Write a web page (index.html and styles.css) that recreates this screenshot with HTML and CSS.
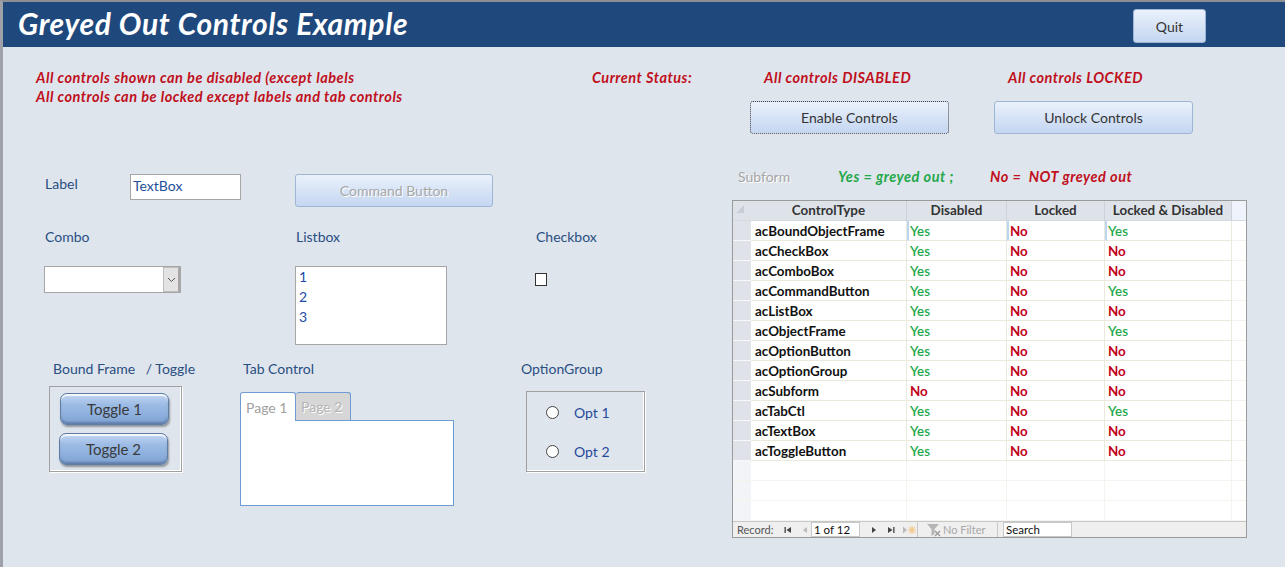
FILE: index.html
```html
<!DOCTYPE html>
<html>
<head>
<meta charset="utf-8">
<link rel="stylesheet" href="styles.css">
</head>
<body>
<div class="window">
  <header class="titlebar">
    <h1 class="title">Greyed Out Controls Example</h1>
    <button class="btn quit">Quit</button>
  </header>
  <main class="form">
    <section class="top">
      <div class="notes">
        <p>All controls shown can be disabled (except labels</p>
        <p>All controls can be locked except labels and tab controls</p>
      </div>
      <div class="status-label">Current Status:</div>
      <div class="status-col">
        <div class="status-text">All controls DISABLED</div>
        <button class="btn action focused">Enable Controls</button>
      </div>
      <div class="status-col second">
        <div class="status-text">All controls LOCKED</div>
        <button class="btn action">Unlock Controls</button>
      </div>
    </section>
    <section class="content">
      <div class="controls">
        <div class="row row1">
          <div class="lbl w-label">Label</div>
          <div class="textbox">TextBox</div>
          <button class="btn cmd" disabled>Command Button</button>
        </div>
        <div class="row row2">
          <div class="lbl w-combo">Combo</div>
          <div class="lbl w-list">Listbox</div>
          <div class="lbl">Checkbox</div>
        </div>
        <div class="row row3">
          <div class="combo"><span class="combo-field"></span><span class="combo-arrow"><svg width="9" height="6" viewBox="0 0 9 6"><path d="M1 1 L4.5 4.5 L8 1" fill="none" stroke="#555" stroke-width="1"/></svg></span></div>
          <div class="listbox"><div>1</div><div>2</div><div>3</div></div>
          <div class="checkbox"></div>
        </div>
        <div class="row row4">
          <div class="lbl w-frame">Bound Frame&nbsp;&nbsp; / Toggle</div>
          <div class="lbl w-tab">Tab Control</div>
          <div class="lbl">OptionGroup</div>
        </div>
        <div class="row row5">
          <div class="frame">
            <div class="toggle t1">Toggle 1</div>
            <div class="toggle t2">Toggle 2</div>
          </div>
          <div class="tabctl">
            <div class="tabs">
              <div class="tab active">Page 1</div>
              <div class="tab inactive">Page 2</div>
            </div>
            <div class="tabpanel"></div>
          </div>
          <div class="optgroup">
            <div class="opt"><span class="radio"></span><span class="opt-lbl">Opt 1</span></div>
            <div class="opt"><span class="radio"></span><span class="opt-lbl">Opt 2</span></div>
          </div>
        </div>
      </div>
      <div class="subform">
        <div class="subhead">
          <span class="sub-lbl">Subform</span>
          <span class="legend-yes">Yes = greyed out ;</span>
          <span class="legend-no">No =&nbsp; NOT greyed out</span>
        </div>
        <div class="datasheet">
          <div class="grid">
            <div class="hc sel"><svg width="10" height="10" viewBox="0 0 10 10"><path d="M9 1 L9 9 L1 9 Z" fill="#c9ced6"/></svg></div>
            <div class="hc">ControlType</div>
            <div class="hc">Disabled</div>
            <div class="hc">Locked</div>
            <div class="hc">Locked &amp; Disabled</div>
            <div class="hc pad"></div>

            <div class="c sel"></div><div class="c name cur">acBoundObjectFrame</div><div class="c y cur">Yes</div><div class="c n cur">No</div><div class="c y cur">Yes</div><div class="c pad"></div>
            <div class="c sel"></div><div class="c name">acCheckBox</div><div class="c y">Yes</div><div class="c n">No</div><div class="c n">No</div><div class="c pad"></div>
            <div class="c sel"></div><div class="c name">acComboBox</div><div class="c y">Yes</div><div class="c n">No</div><div class="c n">No</div><div class="c pad"></div>
            <div class="c sel"></div><div class="c name">acCommandButton</div><div class="c y">Yes</div><div class="c n">No</div><div class="c y">Yes</div><div class="c pad"></div>
            <div class="c sel"></div><div class="c name">acListBox</div><div class="c y">Yes</div><div class="c n">No</div><div class="c n">No</div><div class="c pad"></div>
            <div class="c sel"></div><div class="c name">acObjectFrame</div><div class="c y">Yes</div><div class="c n">No</div><div class="c y">Yes</div><div class="c pad"></div>
            <div class="c sel"></div><div class="c name">acOptionButton</div><div class="c y">Yes</div><div class="c n">No</div><div class="c n">No</div><div class="c pad"></div>
            <div class="c sel"></div><div class="c name">acOptionGroup</div><div class="c y">Yes</div><div class="c n">No</div><div class="c n">No</div><div class="c pad"></div>
            <div class="c sel"></div><div class="c name">acSubform</div><div class="c n">No</div><div class="c n">No</div><div class="c n">No</div><div class="c pad"></div>
            <div class="c sel"></div><div class="c name">acTabCtl</div><div class="c y">Yes</div><div class="c n">No</div><div class="c y">Yes</div><div class="c pad"></div>
            <div class="c sel"></div><div class="c name">acTextBox</div><div class="c y">Yes</div><div class="c n">No</div><div class="c n">No</div><div class="c pad"></div>
            <div class="c sel"></div><div class="c name">acToggleButton</div><div class="c y">Yes</div><div class="c n">No</div><div class="c n">No</div><div class="c pad"></div>

            <div class="e sel"></div><div class="e"></div><div class="e"></div><div class="e"></div><div class="e"></div><div class="e pad"></div>
            <div class="e sel"></div><div class="e"></div><div class="e"></div><div class="e"></div><div class="e"></div><div class="e pad"></div>
            <div class="e sel"></div><div class="e"></div><div class="e"></div><div class="e"></div><div class="e"></div><div class="e pad"></div>
          </div>
          <div class="navbar">
            <span class="nav-rec">Record:</span>
            <span class="nav-ico first"><svg width="8" height="8" viewBox="0 0 8 8"><rect x="0.5" y="1" width="1.3" height="6" fill="#444"/><path d="M7 1 L7 7 L2.5 4 Z" fill="#444"/></svg></span>
            <span class="nav-ico prev"><svg width="6" height="8" viewBox="0 0 6 8"><path d="M5 1 L5 7 L1 4 Z" fill="#bbb"/></svg></span>
            <span class="nav-box">1 of 12</span>
            <span class="nav-ico next"><svg width="6" height="8" viewBox="0 0 6 8"><path d="M1 1 L1 7 L5 4 Z" fill="#444"/></svg></span>
            <span class="nav-ico last"><svg width="8" height="8" viewBox="0 0 8 8"><path d="M1 1 L1 7 L5.5 4 Z" fill="#444"/><rect x="6.2" y="1" width="1.3" height="6" fill="#444"/></svg></span>
            <span class="nav-ico new"><svg width="14" height="10" viewBox="0 0 14 10"><path d="M1 1.5 L1 8.5 L5 5 Z" fill="#bbb"/><g stroke="#f3c98a" stroke-width="1.2"><path d="M10 1 L10 9"/><path d="M6 5 L14 5"/><path d="M7.2 2.2 L12.8 7.8"/><path d="M12.8 2.2 L7.2 7.8"/></g></svg></span>
            <span class="nav-sep"></span>
            <span class="nav-filter"><svg width="16" height="14" viewBox="0 0 16 14"><path d="M1 1 L13 1 L8.5 6 L8.5 11 L5.5 13 L5.5 6 Z" fill="#b5b5b5"/><path d="M9 8 L14 13 M14 8 L9 13" stroke="#9a9a9a" stroke-width="1.3"/></svg>No Filter</span>
            <span class="nav-sep"></span>
            <span class="nav-search">Search</span>
          </div>
        </div>
      </div>
    </section>
  </main>
</div>
</body>
</html>
```
FILE: styles.css
```css
* { box-sizing: border-box; }
html, body { margin: 0; padding: 0; }
body {
  width: 1285px;
  height: 567px;
  overflow: hidden;
  font-family: Lato, "Open Sans", sans-serif;
  background: #dfe5ed;
}
.window {
  height: 567px;
  border-left: 3px solid #9ea2a8;
  border-top: 2px solid #8c8f94;
  background: #dfe5ed;
}
.titlebar {
  height: 45px;
  background: #1f497d;
  display: flex;
  align-items: flex-start;
  justify-content: space-between;
  padding: 0 79px 0 15px;
}
.title {
  margin: 4px 0 0 0;
  color: #fff;
  font-size: 30px;
  font-weight: 700;
  font-style: italic;
  line-height: 34px;
  letter-spacing: 0.65px;
}
.btn {
  font-family: Lato, "Open Sans", sans-serif;
  background: linear-gradient(#eaf1fb, #c4d6f1);
  border: 1px solid #9fb5d4;
  border-radius: 3px;
  color: #333;
  font-size: 14px;
  padding: 0;
}
.quit {
  margin-top: 7px;
  width: 73px;
  height: 34px;
}
.top {
  display: flex;
  padding-top: 21px;
  height: 87px;
}
.notes {
  width: 556px;
  margin-left: 33px;
}
.notes p, .status-label, .status-text {
  margin: 0;
  color: #c0101c;
  font-weight: 700;
  font-style: italic;
  font-size: 14.5px;
  letter-spacing: 0.5px;
  line-height: 19px;
  white-space: nowrap;
}
.status-label { width: 158px; }
.status-col {
  width: 199px;
  display: flex;
  flex-direction: column;
}
.status-col.second { margin-left: 45px; }
.status-text { padding-left: 14px; }
.action {
  margin-top: 14px;
  height: 33px;
  width: 199px;
}
.focused { border: 1px dotted #444; }

.content {
  display: flex;
  margin-top: 33px;
}
.controls {
  width: 729px;
  padding-top: 7px;
}
.row { display: flex; }
.lbl {
  color: #284e82;
  font-size: 14px;
  line-height: 19px;
  white-space: nowrap;
}
.row1 { height: 33px; }
.row1 .lbl { margin-left: 42px; width: 85px; }
.textbox {
  width: 111px;
  height: 26px;
  background: #fff;
  border: 1px solid #a6a6a6;
  color: #1f4f9a;
  font-size: 14px;
  line-height: 22px;
  padding-left: 2px;
}
.cmd {
  margin-left: 54px;
  width: 198px;
  height: 33px;
  color: #a8a8a8;
  text-shadow: 1px 1px 0 #fff;
}
.row2 { margin-top: 20px; }
.row2 .w-combo { margin-left: 42px; width: 251px; }
.row2 .w-list { width: 240px; }
.row3 { margin-top: 20px; }
.combo {
  margin-left: 41px;
  width: 137px;
  height: 27px;
  border: 1px solid #a6a6a6;
  background: #fff;
  display: flex;
}
.combo-field { flex: 1; }
.combo-arrow {
  width: 17px;
  background: #e3e3e3;
  border: 1px solid #bdbdbd;
  border-right: 2px solid #a6a6a6;
  display: flex;
  align-items: center;
  justify-content: center;
}
.listbox {
  margin-left: 114px;
  width: 152px;
  height: 79px;
  background: #fff;
  border: 1px solid #a6a6a6;
  padding: 0 0 0 3px;
  color: #1d4aa8;
  font-size: 14px;
  line-height: 20px;
}
.checkbox {
  margin-left: 88px;
  margin-top: 7px;
  width: 12px;
  height: 13px;
  border: 1px solid #333;
  background: #fff;
}
.row4 { margin-top: 14px; }
.row4 .w-frame { margin-left: 50px; width: 190px; }
.row4 .w-tab { width: 278px; }
.row5 { margin-top: 8px; }
.frame {
  margin-left: 46px;
  width: 133px;
  height: 86px;
  border: 1px solid #a0a0a0;
  box-shadow: inset -1px -1px 0 #fff, 1px 1px 0 #fff;
  padding-top: 6px;
}
.toggle {
  width: 109px;
  height: 32px;
  border-radius: 7px;
  border: 1px solid #5d7ca6;
  background: linear-gradient(#c3d6f2 0%, #9dbce5 35%, #8cafdd 70%, #7fa1d0 100%);
  box-shadow: inset 0 2px 1px rgba(255,255,255,0.85), inset 0 -2px 2px rgba(40,60,100,0.35), 1px 2px 2px rgba(0,0,0,0.35);
  color: #3a3a3a;
  font-size: 15px;
  line-height: 30px;
  text-align: center;
}
.t1 { margin-left: 10px; }
.t2 { margin-left: 9px; margin-top: 8px; }
.tabctl {
  margin-left: 58px;
  margin-top: 6px;
  width: 214px;
}
.tabs { display: flex; height: 28px; align-items: flex-end; }
.tab {
  font-size: 14px;
  color: #a0a0a0;
  border: 1px solid #6f9bd5;
  border-bottom: none;
  border-radius: 3px 3px 0 0;
  padding-left: 5px;
}
.tab.active {
  width: 56px;
  height: 29px;
  background: #fff;
  position: relative;
  z-index: 1;
  margin-bottom: -1px;
  line-height: 30px;
}
.tab.inactive {
  width: 55px;
  height: 28px;
  background: #d6d6d6;
  color: #b4b4b4;
  text-shadow: 1px 1px 0 #fff;
  line-height: 28px;
  border-left: none;
  padding-left: 5px;
  margin-top: 1px;
}
.tabpanel {
  height: 86px;
  background: #fff;
  border: 1px solid #6f9bd5;
}
.optgroup {
  margin-left: 72px;
  margin-top: 5px;
  width: 119px;
  height: 81px;
  border: 1px solid #a0a0a0;
  box-shadow: inset -1px -1px 0 #fff, 1px 1px 0 #fff;
  padding-top: 10px;
}
.opt { display: flex; align-items: center; height: 20px; margin-bottom: 19px; }
.radio {
  margin-left: 19px;
  width: 13px;
  height: 13px;
  border-radius: 50%;
  border: 1px solid #444;
  background: #fff;
}
.opt-lbl {
  margin-left: 15px;
  color: #1f4a9a;
  font-size: 14px;
}

.subform { width: 515px; }
.subhead {
  height: 33px;
  display: flex;
  font-size: 14px;
  line-height: 19px;
  padding-top: 0;
}
.sub-lbl {
  margin-left: 6px;
  width: 100px;
  color: #a6a6a6;
  text-shadow: 1px 1px 0 #fff;
}
.legend-yes, .legend-no {
  font-weight: 700;
  font-style: italic;
  font-size: 14.5px;
  letter-spacing: 0.5px;
}
.legend-yes { color: #22a84a; width: 152px; white-space: nowrap; }
.legend-no { color: #c0101c; white-space: pre; }
.datasheet {
  width: 515px;
  height: 338px;
  border: 1px solid #9a9a9a;
  background: #fff;
}
.grid {
  display: grid;
  grid-template-columns: 18px 156px 100px 98px 127px 1fr;
  grid-auto-rows: 20px;
}
.hc {
  background: #dee3ea;
  border-right: 1px solid #cdd2da;
  border-bottom: 1px solid #d5d9e0;
  font-size: 13.4px;
  font-weight: 700;
  color: #333;
  text-align: center;
  line-height: 19px;
  white-space: nowrap;
}
.hc.sel { display: flex; align-items: flex-start; padding: 3px 0 0 2px; border-right: none; }
.hc.pad { background: #eff3fb; border-right: none; }
.c {
  border-right: 1px solid #ebe9dc;
  border-bottom: 1px solid #ebe9dc;
  font-size: 13.4px;
  font-weight: 700;
  line-height: 20px;
  padding-left: 3px;
  white-space: nowrap;
}
.c.sel { background: #dfe3e9; border-right: none; border-bottom: 1px solid #f6f7f9; padding: 0; }
.c.name { color: #111; padding-left: 4px; }
.c.y { color: #1ea84b; font-weight: 600; }
.c.n { color: #c00018; }
.c.cur { border-left: 2px solid #bcd6f2; padding-left: 1px; }
.c.name.cur { border-left: none; padding-left: 4px; }
.c.pad { border-right: none; border-bottom: 1px solid #f3f3ee; }
.e {
  border-right: 1px solid #f4f4ef;
  border-bottom: 1px solid #f4f4ef;
}
.e.sel { background: #f2f4f8; border-right: none; }
.e.pad { border-right: none; }
.navbar {
  height: 16px;
  background: #efefef;
  border-top: 1px solid #c8c8c8;
  display: flex;
  align-items: center;
  font-size: 11px;
  color: #555;
  font-family: Lato, "Open Sans", sans-serif;
}
.nav-rec { margin-left: 4px; width: 47px; }
.nav-ico { display: flex; align-items: center; }
.nav-ico.first { width: 18px; }
.nav-ico.prev { width: 9px; }
.nav-box {
  width: 49px;
  height: 15px;
  background: #fff;
  border: 1px solid #c8c8c8;
  color: #111;
  padding-left: 2px;
  line-height: 13px;
  font-size: 11.5px;
}
.nav-ico.next { margin-left: 11px; width: 16px; }
.nav-ico.last { width: 15px; }
.nav-ico.new { width: 15px; }
.nav-sep { width: 1px; height: 15px; background: #c8c8c8; }
.nav-filter { display: flex; align-items: center; color: #a8a8a8; margin-left: 8px; width: 71px; gap: 1px; }
.nav-search {
  margin-left: 5px;
  width: 69px;
  height: 15px;
  background: #fff;
  border: 1px solid #c8c8c8;
  color: #111;
  padding-left: 2px;
  line-height: 13px;
  font-size: 11.5px;
}
```
